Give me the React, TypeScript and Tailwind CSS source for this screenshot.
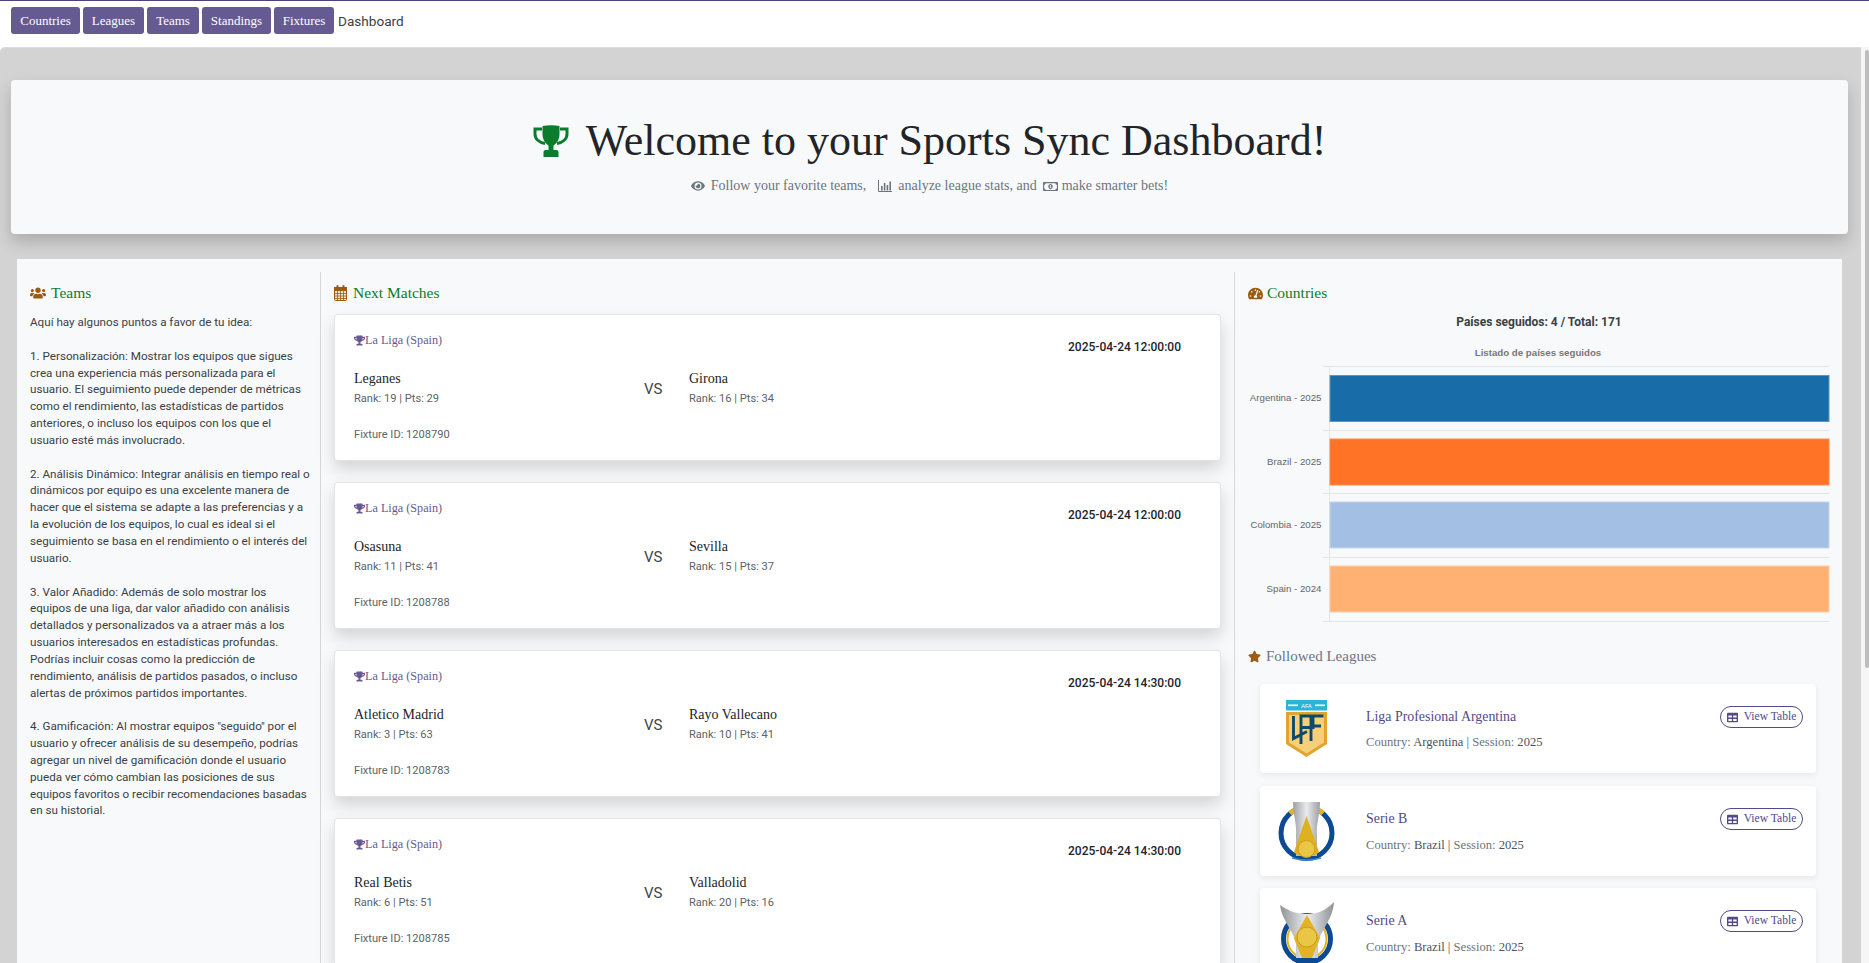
import React from "react";
import { FaTrophy, FaUsers, FaTachometerAlt, FaStar, FaEye, FaRegMoneyBillAlt, FaTable } from "react-icons/fa";

const serif = "font-['Liberation_Serif',serif]";
const sans = "font-['Roboto',sans-serif]";

const navItems = ["Countries", "Leagues", "Teams", "Standings", "Fixtures"];
const navWidths = ["w-[69px]", "w-[61px]", "w-[52px]", "w-[69px]", "w-[60px]"];

const paragraphs = [
  "Aquí hay algunos puntos a favor de tu idea:",
  "1. Personalización: Mostrar los equipos que sigues crea una experiencia más personalizada para el usuario. El seguimiento puede depender de métricas como el rendimiento, las estadísticas de partidos anteriores, o incluso los equipos con los que el usuario esté más involucrado.",
  "2. Análisis Dinámico: Integrar análisis en tiempo real o dinámicos por equipo es una excelente manera de hacer que el sistema se adapte a las preferencias y a la evolución de los equipos, lo cual es ideal si el seguimiento se basa en el rendimiento o el interés del usuario.",
  "3. Valor Añadido: Además de solo mostrar los equipos de una liga, dar valor añadido con análisis detallados y personalizados va a atraer más a los usuarios interesados en estadísticas profundas. Podrías incluir cosas como la predicción de rendimiento, análisis de partidos pasados, o incluso alertas de próximos partidos importantes.",
  "4. Gamificación: Al mostrar equipos \"seguido\" por el usuario y ofrecer análisis de su desempeño, podrías agregar un nivel de gamificación donde el usuario pueda ver cómo cambian las posiciones de sus equipos favoritos o recibir recomendaciones basadas en su historial.",
];

const matches = [
  { date: "2025-04-24 12:00:00", a: "Leganes", ar: "Rank: 19 | Pts: 29", b: "Girona", br: "Rank: 16 | Pts: 34", id: "1208790" },
  { date: "2025-04-24 12:00:00", a: "Osasuna", ar: "Rank: 11 | Pts: 41", b: "Sevilla", br: "Rank: 15 | Pts: 37", id: "1208788" },
  { date: "2025-04-24 14:30:00", a: "Atletico Madrid", ar: "Rank: 3 | Pts: 63", b: "Rayo Vallecano", br: "Rank: 10 | Pts: 41", id: "1208783" },
  { date: "2025-04-24 14:30:00", a: "Real Betis", ar: "Rank: 6 | Pts: 51", b: "Valladolid", br: "Rank: 20 | Pts: 16", id: "1208785" },
];

function HeroTrophy() {
  return (
    <svg viewBox="0 0 36 32" className="w-[36px] h-[32px] mr-[17px] shrink-0">
      <path d="M9 4H2V9C2 14 6 17.5 12 18.5M27 4H34V9C34 14 30 17.5 24 18.5" fill="none" stroke="#0a7d2c" strokeWidth="3" />
      <path d="M9.5 1Q18 -0.5 26.5 1V9C26.5 15 23 19 20.5 20.5V25H23.5Q25.5 25 25.5 27V32H10.5V27Q10.5 25 12.5 25H15.5V20.5C13 19 9.5 15 9.5 9Z" fill="#0a7d2c" />
    </svg>
  );
}

function CalendarIcon() {
  return (
    <svg viewBox="0 0 13 16" className="w-[13px] h-[16px]">
      <rect x="0.5" y="2.5" width="12" height="13" rx="1" fill="#f3e6d3" stroke="#9a5b13" />
      <rect x="0" y="2" width="13" height="4" fill="#9a5b13" />
      <rect x="2.5" y="0" width="2" height="4" rx="1" fill="#9a5b13" />
      <rect x="8.5" y="0" width="2" height="4" rx="1" fill="#9a5b13" />
      <path d="M0 8.5H13M0 11H13M0 13.5H13M3.5 6V16M6.5 6V16M9.5 6V16" stroke="#9a5b13" strokeWidth="0.8" fill="none" />
    </svg>
  );
}

function BarsIcon() {
  return (
    <svg viewBox="0 0 14 12" className="w-[14px] h-[12px] ml-[12px] mr-[6px]">
      <path d="M0.5 0V11.5H14" fill="none" stroke="#6c757d" />
      <rect x="3" y="6" width="1.6" height="4.5" fill="#6c757d" />
      <rect x="5.8" y="3" width="1.6" height="7.5" fill="#6c757d" />
      <rect x="8.6" y="5" width="1.6" height="5.5" fill="#6c757d" />
      <rect x="11.4" y="1.5" width="1.6" height="9" fill="#6c757d" />
    </svg>
  );
}

function SectionTitle({ icon, text, box }: { icon: React.ReactNode; text: string; box: string }) {
  return (
    <div className="flex items-center h-[20px]">
      <span className={`${box} text-[#9a5b13] flex items-center`}>{icon}</span>
      <span className={`${serif} text-[#0a7d2c] text-[15.5px]`}>{text}</span>
    </div>
  );
}

function MatchCard({ m }: { m: (typeof matches)[number] }) {
  return (
    <div className="h-[147px] mb-[21px] bg-white rounded-[4px] border border-black/10 shadow-[0_8px_16px_rgba(0,0,0,0.15)] pl-[19px] pr-[39px] pt-[17px]">
      <div className="flex justify-between">
        <div className={`${serif} flex items-center h-[16px] text-[#655a92] text-[12.2px]`}>
          <FaTrophy className="text-[11px]" />
          <span>La Liga (Spain)</span>
        </div>
        <div className={`${sans} mt-[7px] h-[16px] leading-[16px] text-[#212529] text-[12px] font-medium`}>{m.date}</div>
      </div>
      <div className="flex mt-[15px]">
        <div className="w-[290px]">
          <div className={`${serif} text-[#212529] text-[14px] leading-[18px]`}>{m.a}</div>
          <div className={`${sans} mt-[3px] text-[#5c636a] text-[11.1px] leading-[16px]`}>{m.ar}</div>
        </div>
        <div className={`${sans} w-[45px] mt-[9px] text-[#41464b] text-[15px] leading-[20px]`}>VS</div>
        <div>
          <div className={`${serif} text-[#212529] text-[14px] leading-[18px]`}>{m.b}</div>
          <div className={`${sans} mt-[3px] text-[#5c636a] text-[11.1px] leading-[16px]`}>{m.br}</div>
        </div>
      </div>
      <div className={`${sans} mt-[20px] text-[#5c636a] text-[11.1px] leading-[16px]`}>Fixture ID: {m.id}</div>
    </div>
  );
}

function LpfLogo() {
  return (
    <svg viewBox="0 0 41 57" className="w-[41px] h-[57px]">
      <rect x="0" y="0" width="41" height="10.5" fill="#2cb5d6" />
      <rect x="2" y="4.5" width="10" height="1.6" fill="#fff" />
      <rect x="29" y="4.5" width="10" height="1.6" fill="#fff" />
      <text x="20.5" y="7.6" textAnchor="middle" fontSize="5.5" fill="#fff" fontFamily="Liberation Sans">AFA</text>
      <path d="M0 12H41V44L20.5 57L0 44Z" fill="#e3a32f" />
      <path d="M3 15H38V42.5L20.5 53.5L3 42.5Z" fill="#f6d078" />
      <path d="M7.5 16V38.5L21 31.5M15 44V16H27V27.5H15.5M25 16V41M25 16H37.5M25 26H35" fill="none" stroke="#0f4a68" strokeWidth="2.9" />
    </svg>
  );
}

function SerieBLogo() {
  return (
    <svg viewBox="0 0 57 59" className="w-[57px] h-[59px]">
      <defs>
        <linearGradient id="silverB" x1="0" x2="1" y1="0" y2="0">
          <stop offset="0" stopColor="#9da0a5" />
          <stop offset="0.5" stopColor="#e9ebed" />
          <stop offset="1" stopColor="#9da0a5" />
        </linearGradient>
      </defs>
      <circle cx="28.5" cy="31" r="25.5" fill="none" stroke="#0d4a94" strokeWidth="5" />
      <path d="M12 11.5A25.5 25.5 0 0 1 20 6.5M37 6.5A25.5 25.5 0 0 1 45 11.5" fill="none" stroke="#e2b324" strokeWidth="5" />
      <path d="M15 0H42C42 12 38 22 39 34V54H18V34C19 22 15 12 15 0Z" fill="url(#silverB)" />
      <path d="M28.5 14L41 50C36 56 21 56 16 50Z" fill="#dfb11f" />
      <circle cx="28.5" cy="47" r="8.5" fill="#e9c645" stroke="#c99c14" />
      <path d="M14 56Q28.5 60 43 56" fill="none" stroke="#3a8bc4" strokeWidth="1.5" />
    </svg>
  );
}

function SerieALogo() {
  return (
    <svg viewBox="0 0 54 62" className="w-[54px] h-[62px]">
      <defs>
        <linearGradient id="silverA" x1="0" x2="1" y1="0" y2="0">
          <stop offset="0" stopColor="#8f9296" />
          <stop offset="0.5" stopColor="#eceef0" />
          <stop offset="1" stopColor="#8f9296" />
        </linearGradient>
      </defs>
      <circle cx="27" cy="37" r="23.5" fill="none" stroke="#0d4a94" strokeWidth="5" />
      <circle cx="27" cy="37" r="19.5" fill="none" stroke="#e2b324" strokeWidth="2" />
      <path d="M0 3C10 10 18 12 27 12C36 12 44 10 54 0C53 18 40 28 38 42V60H16V42C14 28 2 20 0 3Z" fill="url(#silverA)" />
      <path d="M27 13L40 36L32 56H22L14 36Z" fill="#e2b324" />
      <circle cx="27" cy="35" r="10" fill="#e9c645" stroke="#c99c14" />
      <rect x="16" y="56" width="22" height="6" fill="#0d4a94" />
    </svg>
  );
}

function LeagueCard({ logo, title, country, h, mb, infoGap }: { logo: React.ReactNode; title: string; country: string; h: string; mb: string; infoGap: string }) {
  return (
    <div className={`flex ${h} ${mb} bg-white rounded-[4px] shadow-[0_2px_6px_rgba(0,0,0,0.08)]`}>
      <div className="w-[93px] mr-[13px] flex items-center justify-center">{logo}</div>
      <div className="flex-1 pt-[23px]">
        <div className={`${serif} text-[#524a8a] text-[13.9px] leading-[20px]`}>{title}</div>
        <div className={`${serif} ${infoGap} text-[#6c757d] text-[12.6px] leading-[18px]`}>
          Country: <span className="text-[#4d5359]">{country} |</span> Session: <span className="text-[#4d5359]">2025</span>
        </div>
      </div>
      <div className="pt-[22px] pr-[13px]">
        <div className={`${serif} flex items-center justify-center gap-[6px] w-[83px] h-[22px] rounded-full border border-[#524a8a] text-[#524a8a] text-[11.6px]`}>
          <FaTable className="text-[11px]" />
          <span>View Table</span>
        </div>
      </div>
    </div>
  );
}

const chartRows = [
  { label: "Argentina - 2025", y: 10, fill: "#186da8", edge: "#5b97c6" },
  { label: "Brazil - 2025", y: 73.5, fill: "#ff7326", edge: "#ff8a4d" },
  { label: "Colombia - 2025", y: 136.5, fill: "#a3bfe3", edge: "#c3d5ec" },
  { label: "Spain - 2024", y: 200.5, fill: "#ffb073", edge: "#ffcda6" },
];

function CountriesChart() {
  return (
    <svg viewBox="0 0 587 285" className="w-[587px] h-[285px] block">
      <text x="290" y="15" textAnchor="middle" fontSize="9.7" fontWeight="700" fill="#777" fontFamily="Liberation Sans">Listado de países seguidos</text>
      {[25, 89, 152, 216, 280].map((y) => (
        <line key={y} x1="75" x2="581" y1={y + 0.5} y2={y + 0.5} stroke="#e4e5e7" />
      ))}
      <line x1="81.5" x2="81.5" y1="25" y2="281" stroke="#e4e5e7" />
      {chartRows.map((r) => (
        <g key={r.label}>
          <rect x="82" y={r.y + 24.5} width="499" height="46" fill={r.fill} stroke={r.edge} />
          <text x="73.5" y={r.y + 50} textAnchor="end" fontSize="9.7" fill="#666" fontFamily="Liberation Sans">{r.label}</text>
        </g>
      ))}
    </svg>
  );
}

export default function App() {
  return (
    <div className="w-[1869px] h-[963px] overflow-hidden bg-white flex flex-col">
      <nav className="h-[47px] shrink-0 border-t border-[#4b4376] flex items-start gap-[3px] pl-[11px] pt-[6px]">
        {navItems.map((n, i) => (
          <div key={n} className={`${serif} ${navWidths[i]} h-[27px] rounded-[3px] bg-[#655a92] text-white text-[13px] flex items-center justify-center`}>{n}</div>
        ))}
        <div className={`${sans} h-[27px] ml-[1px] leading-[28px] text-[#3a3f44] text-[13.6px]`}>Dashboard</div>
      </nav>
      <div className="flex flex-1 min-h-0">
        <main className="flex-1 min-w-0 overflow-hidden bg-[#d3d3d3] rounded-tl-[5px] border-t border-[#dcdcdc] pt-[32px]">
          <section className="h-[154px] ml-[11px] mr-[13px] rounded-[4px] bg-[#f8f9fa] shadow-[0_8px_16px_rgba(0,0,0,0.18)] flex flex-col items-center pt-[45px]">
            <h1 className={`${serif} flex items-center text-[#212529] text-[44px] leading-[32px] h-[32px] font-normal`}>
              <HeroTrophy />
              <span>Welcome to your Sports Sync Dashboard!</span>
            </h1>
            <p className={`${serif} mt-[19px] flex items-center text-[#6c757d] text-[14px] leading-[20px]`}>
              <FaEye className="text-[14px] mr-[6px]" />
              <span>Follow your favorite teams,</span>
              <BarsIcon />
              <span>analyze league stats, and</span>
              <FaRegMoneyBillAlt className="text-[15px] ml-[6px] mr-[4px]" />
              <span>make smarter bets!</span>
            </p>
          </section>
          <section className="mt-[25px] ml-[17px] mr-[19px] h-[800px] bg-[#f8f9fa] flex pt-[13px]">
            <div className="w-[304px] shrink-0 border-r border-[#d5d7d9] pl-[13px] pr-[10px] pt-[11px]">
              <SectionTitle icon={<FaUsers className="text-[16px]" />} box="w-[21px]" text="Teams" />
              <div className={`${sans} mt-[11px] text-[#3a3f44] text-[11.65px] leading-[16.85px]`}>
                {paragraphs.map((p) => (
                  <p key={p} className="mb-[16.85px]">{p}</p>
                ))}
              </div>
            </div>
            <div className="w-[914px] shrink-0 border-r border-[#d5d7d9] pl-[13px] pr-[13px] pt-[11px]">
              <SectionTitle icon={<CalendarIcon />} box="w-[19px]" text="Next Matches" />
              <div className="mt-[11px]">
                {matches.map((m) => (
                  <MatchCard key={m.id} m={m} />
                ))}
              </div>
            </div>
            <div className="flex-1 min-w-0 pl-[13px] pt-[11px]">
              <SectionTitle icon={<FaTachometerAlt className="text-[15px]" />} box="w-[19px]" text="Countries" />
              <div className={`${sans} mt-[9px] text-center pr-[12px] text-[#3a3f44] text-[12px] font-bold leading-[20px]`}>Países seguidos: 4 / Total: 171</div>
              <div className="mt-[9px]">
                <CountriesChart />
              </div>
              <div className="mt-[20px] flex items-center h-[20px]">
                <span className="w-[18px] flex items-center text-[#9a5b13]"><FaStar className="text-[13px]" /></span>
                <span className={`${serif} text-[#6c757d] text-[15px]`}>Followed Leagues</span>
              </div>
              <div className="mt-[18px] ml-[12px] mr-[26px]">
                <LeagueCard logo={<LpfLogo />} title="Liga Profesional Argentina" country="Argentina" h="h-[89px]" mb="mb-[13px]" infoGap="mt-[6px]" />
                <LeagueCard logo={<SerieBLogo />} title="Serie B" country="Brazil" h="h-[90px]" mb="mb-[12px]" infoGap="mt-[7px]" />
                <LeagueCard logo={<SerieALogo />} title="Serie A" country="Brazil" h="h-[90px]" mb="mb-[12px]" infoGap="mt-[7px]" />
              </div>
            </div>
          </section>
        </main>
        <div className="w-[8px] shrink-0 bg-[#f6f6f6] flex justify-end">
          <div className="w-[4px] h-[618px] mt-[3px] rounded-full bg-[#bdbdbd]" />
        </div>
      </div>
    </div>
  );
}
